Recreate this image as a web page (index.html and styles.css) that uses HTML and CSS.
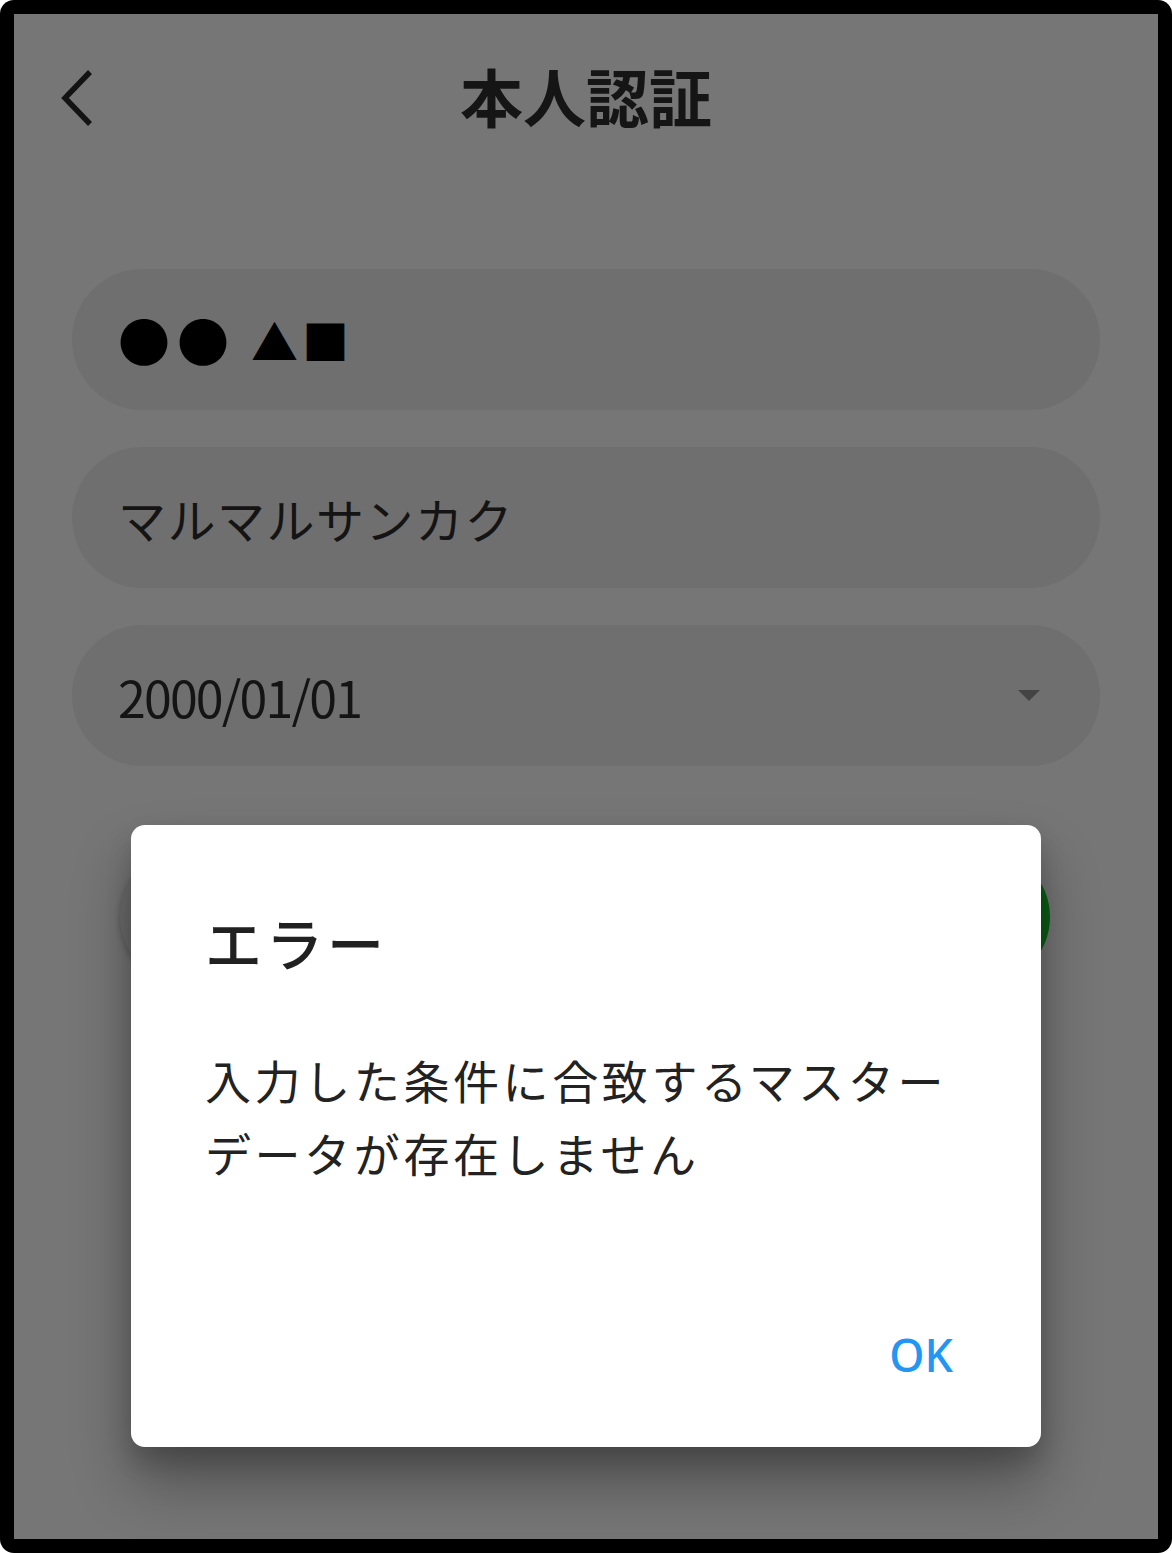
FILE: index.html
```html
<!DOCTYPE html>
<html lang="ja">
<head>
<meta charset="utf-8">
<title>本人認証</title>
<link rel="stylesheet" href="styles.css">
</head>
<body>
<div class="frame">
  <div class="screen">
    <header class="header">
      <button class="back" aria-label="戻る">
        <svg width="36" height="60" viewBox="0 0 36 60"><polyline points="31,3 6,29 31,55" fill="none" stroke="#131313" stroke-width="5.5"/></svg>
      </button>
      <h1 class="title">本人認証</h1>
    </header>
    <main class="form">
      <div class="field"><span class="shapes"><span class="circles">●●</span><span class="polys">▲■</span></span></div>
      <div class="field"><span class="value kana">マルマルサンカク</span></div>
      <div class="field select"><span class="value date">2000/01/01</span><span class="caret"></span></div>
      <div class="buttons">
        <div class="btn btn-gray"></div>
        <div class="btn btn-green"></div>
      </div>
    </main>
    <div class="dialog" role="dialog">
      <h2 class="dialog-title">エラー</h2>
      <p class="dialog-body">入力した条件に合致するマスター<br>データが存在しません</p>
      <div class="dialog-actions"><button class="ok">OK</button></div>
    </div>
  </div>
</div>
</body>
</html>
```

FILE: styles.css
```css
html, body {
  margin: 0;
  padding: 0;
  background: #fff;
}
.frame {
  width: 1172px;
  height: 1553px;
  box-sizing: border-box;
  background: #000;
  padding: 14px;
  border-radius: 14px;
}
.screen {
  position: relative;
  width: 100%;
  height: 100%;
  background: #767676;
  overflow: hidden;
  font-family: "Noto Sans CJK JP", "Noto Sans", sans-serif;
  color: #141414;
}
.header {
  position: relative;
  height: 160px;
  display: flex;
  align-items: center;
  justify-content: center;
}
.back {
  position: absolute;
  left: 45px;
  top: 55px;
  padding: 0;
  border: 0;
  background: none;
  width: 36px;
  height: 60px;
}
.back svg { display: block; }
.title {
  margin: 0;
  font-size: 63px;
  font-weight: 700;
  color: #151515;
  letter-spacing: 0;
  line-height: 1;
}
.form {
  padding: 95px 58px 0;
  display: flex;
  flex-direction: column;
  gap: 37px;
}
.field {
  height: 141px;
  border-radius: 71px;
  background: #6f6f6f;
  display: flex;
  align-items: center;
  padding: 0 46px;
}
.shapes {
  display: flex;
  align-items: center;
  color: #000;
  line-height: 1;
}
.circles {
  font-size: 52px;
  letter-spacing: 7px;
}
.polys {
  font-size: 47px;
  letter-spacing: 4px;
  margin-left: 15px;
}
.value {
  font-size: 48px;
  color: #141414;
}
.kana {
  letter-spacing: 1.5px;
}
.date {
  font-size: 50px;
  letter-spacing: -1.8px;
}
.select {
  justify-content: space-between;
  padding-right: 60px;
}
.caret {
  width: 0;
  height: 0;
  border-left: 11px solid transparent;
  border-right: 11px solid transparent;
  border-top: 11px solid #444;
}
.buttons {
  margin-top: 46px;
  padding: 0 50px 0 48px;
  display: flex;
  gap: 60px;
}
.btn {
  flex: 1;
  height: 136px;
  border-radius: 68px;
}
.btn-gray { background: #6e6e6e; box-shadow: 0 2px 6px rgba(0,0,0,0.25); }
.btn-green { background: #0b5e16; }
.dialog {
  position: absolute;
  left: 117px;
  top: 811px;
  width: 910px;
  height: 622px;
  box-sizing: border-box;
  background: #fff;
  border-radius: 14px;
  padding: 79px 88px 0 74px;
  box-shadow: 0 36px 60px rgba(0,0,0,0.32), 0 14px 24px rgba(0,0,0,0.16);
  display: flex;
  flex-direction: column;
}
.dialog-title {
  margin: 0;
  font-size: 57px;
  font-weight: 500;
  line-height: 1.3;
  letter-spacing: 4px;
  color: #212121;
}
.dialog-body {
  margin: 65px 0 0;
  font-size: 46px;
  line-height: 73px;
  letter-spacing: 3.6px;
  color: #222;
  font-weight: 400;
}
.dialog-actions {
  margin-top: auto;
  margin-bottom: 70px;
  display: flex;
  justify-content: flex-end;
}
.ok {
  border: 0;
  background: none;
  padding: 0;
  font-family: "Noto Sans", "Roboto", sans-serif;
  font-size: 45px;
  font-weight: 500;
  color: #2196f3;
  line-height: 1;
}
```
